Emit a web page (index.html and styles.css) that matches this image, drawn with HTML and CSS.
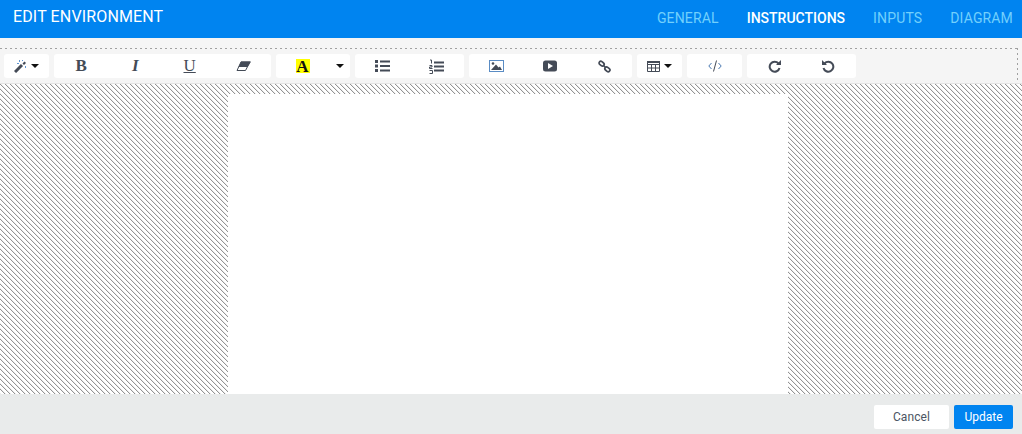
FILE: index.html
```html
<!DOCTYPE html>
<html lang="en">
<head>
<meta charset="utf-8">
<title>Edit Environment</title>
<link rel="stylesheet" href="styles.css">
</head>
<body>
<header class="topbar">
  <h1 class="title">EDIT ENVIRONMENT</h1>
  <nav class="tabs">
    <a class="tab">GENERAL</a>
    <a class="tab active">INSTRUCTIONS</a>
    <a class="tab">INPUTS</a>
    <a class="tab">DIAGRAM</a>
  </nav>
</header>
<main class="editor">
  <div class="toolbar-wrap">
    <div class="toolbar">
      <div class="group w45"><button class="btn grow">
        <svg width="13" height="13" viewBox="0 0 13 13"><path d="M1 12 8 5" stroke="#444b57" stroke-width="3"/><path d="M8.500 3.500 10.500 1.500 12 3 10 5z" fill="#444b57"/><path d="M5 0h1v2H5zM8 0h1v1H8zM3 3h2v1H3zM11 6h1v2h-1z" fill="#5f95d2"/></svg>
        <span class="caret"></span></button></div>
      <div class="group w217">
        <button class="btn grow serif bold">B</button>
        <button class="btn grow serif bolditalic">I</button>
        <button class="btn grow serif under">U</button>
        <button class="btn grow"><svg width="15" height="11" viewBox="0 0 15 11"><path d="M5 1h9L9.500 9.500H1z" fill="none" stroke="#444b57"/><path d="M5 .5h10L11.500 6H2.500z" fill="#444b57"/></svg></button>
      </div>
      <div class="group w74">
        <button class="btn grow"><span class="hilite">A</span></button>
        <button class="btn w21"><span class="caret"></span></button>
      </div>
      <div class="group w109">
        <button class="btn grow"><svg width="15" height="12" viewBox="0 0 15 12"><path d="M5 1.500h10M5 6h10M5 10.500h10" stroke="#444b57" stroke-width="2"/><path d="M0 1.500h3M0 6h3M0 10.500h3" stroke="#444b57" stroke-width="3"/></svg></button>
        <button class="btn grow"><svg width="15" height="15" viewBox="0 0 15 15"><path d="M5 3.500h10M5 7.500h10M5 11.500h10" stroke="#444b57" stroke-width="2"/><path d="M1 1h1.500v3.500M.5 6.500h2.500v1.500H.5v1.500h3M.5 11.500h3v3h-3" fill="none" stroke="#444b57"/></svg></button>
      </div>
      <div class="group w163">
        <button class="btn grow"><svg width="15" height="12" viewBox="0 0 15 12"><rect x=".5" y=".5" width="14" height="11" fill="none" stroke="#5a8cc4"/><path d="M2 10 7 4.500l2.500 3L11 6.500 13 10z" fill="#444b57"/><circle cx="4" cy="3.500" r="1.300" fill="#444b57"/></svg></button>
        <button class="btn grow"><svg width="14" height="12" viewBox="0 0 14 12"><rect width="14" height="11" y=".5" rx="2.500" fill="#444b57"/><path d="M5 3v6l5-3z" fill="#fff"/></svg></button>
        <button class="btn grow"><svg width="13" height="13" viewBox="0 0 13 13"><g fill="none" stroke="#444b57" stroke-width="1.700"><rect x=".9" y="1.900" width="5.500" height="3.500" rx="1.700" transform="rotate(40 3.600 3.600)"/><rect x="6.600" y="7.600" width="5.500" height="3.500" rx="1.700" transform="rotate(40 9.400 9.400)"/><path d="M5 5l3 3"/></g></svg></button>
      </div>
      <div class="group w45"><button class="btn grow">
        <svg width="13" height="11" viewBox="0 0 13 11"><path d="M.5.500h12v10H.500zM.5 3.500h12M.5 7h12M4.500 3.500v7M8.500 3.500v7" fill="none" stroke="#444b57"/><path d="M0 0h13v2H0z" fill="#444b57"/></svg>
        <span class="caret"></span></button></div>
      <div class="group w55"><button class="btn grow"><svg width="14" height="12" viewBox="0 0 14 12"><path d="M3.500 3 .8 6l2.700 3M10.500 3l2.700 3-2.700 3" fill="none" stroke="#4a78b0"/><path d="M8.500.5 5.500 11.500" stroke="#444b57"/></svg></button></div>
      <div class="group w109">
        <button class="btn grow"><svg width="13" height="13" viewBox="0 0 13 13"><path d="M10.500 3.500A5 5 0 1 0 11.500 8" fill="none" stroke="#444b57" stroke-width="2"/><path d="M8 5h5V0z" fill="#444b57"/></svg></button>
        <button class="btn grow"><svg width="13" height="13" viewBox="0 0 13 13"><path d="M2.500 3.500A5 5 0 1 1 1.500 8" fill="none" stroke="#444b57" stroke-width="2"/><path d="M5 5H0V0z" fill="#444b57"/></svg></button>
      </div>
    </div>
  </div>
  <div class="canvas"><div class="page"></div></div>
</main>
<footer class="footer">
  <button class="action cancel">Cancel</button>
  <button class="action update">Update</button>
</footer>
</body>
</html>
```
FILE: styles.css
```css
* { box-sizing: border-box; }
html, body { margin: 0; height: 434px; overflow: hidden; }
body { display: flex; flex-direction: column; font-family: Roboto, sans-serif; background: #e9ebeb; }
.topbar { height: 38px; flex: none; background: #0084f0; display: flex; justify-content: space-between; padding: 0 9px 0 13px; }
.title { margin: 8px 0 0; font-size: 16px; line-height: 18px; font-weight: 400; color: #fff; letter-spacing: .14px; }
.tabs { display: flex; gap: 28px; padding-top: 10px; }
.tab { font-size: 14px; line-height: 17px; color: #72d0fc; letter-spacing: .15px; }
.tab.active { color: #fff; font-weight: 500; letter-spacing: 0; }
.editor { height: 356px; flex: none; display: flex; flex-direction: column; background: #f5f5f5; }
.toolbar-wrap { height: 46px; flex: none; padding-top: 10px; border-bottom: 1px solid #e4e4e4; }
.toolbar { height: 35px; padding: 6px 0 0 4px; margin-right: 4px; display: flex; gap: 5px; align-items: flex-start;
  background:
    repeating-linear-gradient(90deg, #a0a0a0 0 2px, transparent 2px 5px) top / 100% 1px no-repeat,
    repeating-linear-gradient(180deg, #a0a0a0 0 2px, transparent 2px 5px) right / 1px 100% no-repeat; }
.group { height: 24px; display: flex; background: #fff; border-radius: 3px; }
.w45 { width: 45px; } .w217 { width: 217px; } .w74 { width: 74px; } .w109 { width: 109px; } .w163 { width: 163px; } .w55 { width: 55px; }
.btn { height: 24px; border: 0; padding: 0; background: transparent; display: flex; align-items: center; justify-content: center; gap: 4px; color: #444b57; }
.grow { flex: 1 1 0; }
.w21 { width: 21px; flex: none; }
.caret { width: 0; height: 0; border: 4px solid transparent; border-top-color: #111; border-bottom: 0; }
.serif { font-family: "Liberation Serif", serif; font-size: 17px; line-height: 20px; }
.bold { font-weight: 700; }
.bolditalic { font-weight: 700; font-style: italic; }
.under { text-decoration: underline; }
.hilite { display: block; width: 14px; height: 14px; background: #ff0; color: #111; font: 700 17px/16px "Liberation Serif", serif; text-align: center; }
.canvas { flex: 1; display: flex; justify-content: center; padding: 10px 6px 0 0; overflow: hidden;
  background: #fff url("data:image/svg+xml,%3Csvg xmlns='http://www.w3.org/2000/svg' width='5' height='5' shape-rendering='crispEdges'%3E%3Cpath fill='%23949494' d='M0 0h1v1H0zM1 1h1v1H1zM2 2h1v1H2zM3 3h1v1H3zM4 4h1v1H4z'/%3E%3Cpath fill='%23ececec' d='M1 0h1v1H1zM2 1h1v1H2zM3 2h1v1H3zM4 3h1v1H4zM0 4h1v1H0z'/%3E%3C/svg%3E") 0 0 / 5px 5px; }
.page { width: 560px; background: #fff; }
.footer { flex: 1; display: flex; justify-content: flex-end; gap: 5px; padding: 11px 9px 0 0; }
.action { width: 75px; height: 24px; border: 0; border-radius: 2px; font: 400 12px/14px Roboto, sans-serif; padding: 0; }
.cancel { background: #fff; color: #4b5563; letter-spacing: .1px; }
.update { width: 59px; background: #0084f0; color: #fff; }
```
